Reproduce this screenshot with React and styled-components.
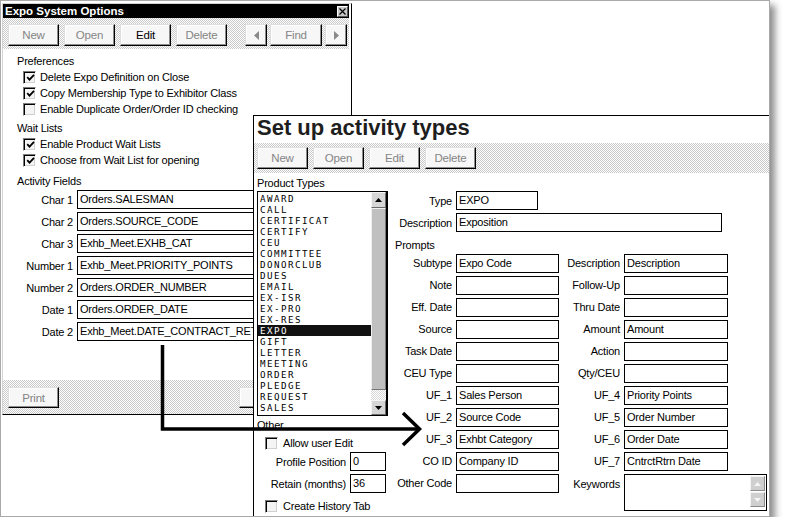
import React from 'react'
import styled, { createGlobalStyle } from 'styled-components'

const GlobalStyle = createGlobalStyle`
  html, body {
    margin: 0;
    padding: 0;
    background: #fff;
  }
  body {
    font-family: "Liberation Sans", Arial, sans-serif;
    font-size: 11px;
    letter-spacing: -0.2px;
    color: #000;
  }
`

const dither = (a, b) => `repeating-conic-gradient(${a} 0 25%, ${b} 0 50%) 0 0 / 2px 2px`

const PRODUCT_TYPES = [
  'AWARD', 'CALL', 'CERTIFICAT', 'CERTIFY', 'CEU', 'COMMITTEE', 'DONORCLUB',
  'DUES', 'EMAIL', 'EX-ISR', 'EX-PRO', 'EX-RES', 'EXPO', 'GIFT', 'LETTER',
  'MEETING', 'ORDER', 'PLEDGE', 'REQUEST', 'SALES',
]

const ACTIVITY_FIELDS = [
  ['Char 1', 'Orders.SALESMAN'],
  ['Char 2', 'Orders.SOURCE_CODE'],
  ['Char 3', 'Exhb_Meet.EXHB_CAT'],
  ['Number 1', 'Exhb_Meet.PRIORITY_POINTS'],
  ['Number 2', 'Orders.ORDER_NUMBER'],
  ['Date 1', 'Orders.ORDER_DATE'],
  ['Date 2', 'Exhb_Meet.DATE_CONTRACT_RET'],
]

const PROMPTS = [
  ['Subtype', 'Expo Code', 'Description', 'Description'],
  ['Note', '', 'Follow-Up', ''],
  ['Eff. Date', '', 'Thru Date', ''],
  ['Source', '', 'Amount', 'Amount'],
  ['Task Date', '', 'Action', ''],
  ['CEU Type', '', 'Qty/CEU', ''],
  ['UF_1', 'Sales Person', 'UF_4', 'Priority Points'],
  ['UF_2', 'Source Code', 'UF_5', 'Order Number'],
  ['UF_3', 'Exhbt Category', 'UF_6', 'Order Date'],
  ['CO ID', 'Company ID', 'UF_7', 'CntrctRtrn Date'],
]

function Check({ checked }) {
  return (
    <CheckBox>
      {checked && (
        <svg width="9" height="9" viewBox="0 0 9 9">
          <path d="M1.2 4.2 L3.5 6.6 L8 1.8" fill="none" stroke="#000" strokeWidth="1.8" />
        </svg>
      )}
    </CheckBox>
  )
}

function Arrow({ dir, color = '#000', w = 7, h = 4 }) {
  const pts = {
    up: `0,${h} ${w / 2},0 ${w},${h}`,
    down: `0,0 ${w / 2},${h} ${w},0`,
    left: `${w},0 0,${h / 2} ${w},${h}`,
    right: `0,0 ${w},${h / 2} 0,${h}`,
  }[dir]
  return (
    <svg width={w} height={h} viewBox={`0 0 ${w} ${h}`}>
      <polygon points={pts} fill={color} />
    </svg>
  )
}

export default function App() {
  return (
    <>
      <GlobalStyle />
      <Desktop>
        <OptionsWindow>
          <TitleBar>
            <span>Expo System Options</span>
            <CloseBox>
              <svg width="7" height="7" viewBox="0 0 7 7">
                <path d="M0.5 0.5 L6.5 6.5 M6.5 0.5 L0.5 6.5" stroke="#000" strokeWidth="1.2" />
              </svg>
            </CloseBox>
          </TitleBar>
          <ToolBar $top={6} $left={5}>
            <Btn $disabled>New</Btn>
            <Btn $disabled>Open</Btn>
            <Btn>Edit</Btn>
            <Btn $disabled>Delete</Btn>
            <NavGroup>
              <Btn $w={22}><Arrow dir="left" color="#8a8a8a" w={5} h={9} /></Btn>
              <Btn $w={52} $disabled>Find</Btn>
              <Btn $w={22}><Arrow dir="right" color="#8a8a8a" w={5} h={9} /></Btn>
            </NavGroup>
          </ToolBar>

          <OptionsBody>
            <SectionLabel>Preferences</SectionLabel>
            <CheckRow><Check checked />Delete Expo Definition on Close</CheckRow>
            <CheckRow><Check checked />Copy Membership Type to Exhibitor Class</CheckRow>
            <CheckRow><Check />Enable Duplicate Order/Order ID checking</CheckRow>

            <SectionLabel $gap={3}>Wait Lists</SectionLabel>
            <CheckRow><Check checked />Enable Product Wait Lists</CheckRow>
            <CheckRow><Check checked />Choose from Wait List for opening</CheckRow>

            <SectionLabel $gap={5}>Activity Fields</SectionLabel>
            <FieldList>
              {ACTIVITY_FIELDS.map(([label, value]) => (
                <FieldRow key={label}>
                  <FieldLabel $w={56}>{label}</FieldLabel>
                  <FieldBox $w={264}>{value}</FieldBox>
                </FieldRow>
              ))}
            </FieldList>
          </OptionsBody>

          <BottomBar>
            <Btn $h={21} $disabled>Print</Btn>
            {/* these two sit behind the activity window, only an edge shows */}
            <BottomRight>
              <Btn $h={21} />
              <Btn $h={21} />
            </BottomRight>
          </BottomBar>
        </OptionsWindow>

        <ActivityWindow>
          <BigTitle>Set up activity types</BigTitle>
          <ToolBar $top={4} $left={3}>
            <Btn $disabled>New</Btn>
            <Btn $disabled>Open</Btn>
            <Btn $disabled>Edit</Btn>
            <Btn $disabled>Delete</Btn>
          </ToolBar>

          <ActivityBody>
            <LeftColumn>
              <SmallLabel>Product Types</SmallLabel>
              <ListBox>
                <ListItems>
                  {PRODUCT_TYPES.map(t => (
                    <ListItem key={t} $selected={t === 'EXPO'}>{t}</ListItem>
                  ))}
                </ListItems>
                <ScrollBar>
                  <ScrollButton $h={16}><Arrow dir="up" /></ScrollButton>
                  <ScrollThumb />
                  <ScrollTrack />
                  <ScrollButton $h={15}><Arrow dir="down" /></ScrollButton>
                </ScrollBar>
              </ListBox>

              <SmallLabel $gap={2}>Other</SmallLabel>
              <OtherCheck><Check />Allow user Edit</OtherCheck>
              <OtherRow $gap={1}>
                <FieldLabel $w={89}>Profile Position</FieldLabel>
                <FieldBox $w={36}>0</FieldBox>
              </OtherRow>
              <OtherRow $gap={3}>
                <FieldLabel $w={89}>Retain (months)</FieldLabel>
                <FieldBox $w={36}>36</FieldBox>
              </OtherRow>
              <OtherCheck $gap={5}><Check />Create History Tab</OtherCheck>
            </LeftColumn>

            <RightColumn>
              <FieldRow>
                <FieldLabel $w={60}>Type</FieldLabel>
                <FieldBox $w={82}>EXPO</FieldBox>
              </FieldRow>
              <FieldRow>
                <FieldLabel $w={60}>Description</FieldLabel>
                <FieldBox $w={266}>Exposition</FieldBox>
              </FieldRow>
              <PromptsLabel>Prompts</PromptsLabel>
              <PromptGrid>
                {PROMPTS.map(([l1, v1, l2, v2]) => (
                  <React.Fragment key={l1}>
                    <GridLabel>{l1}</GridLabel>
                    <FieldBox>{v1}</FieldBox>
                    <GridLabel>{l2}</GridLabel>
                    <FieldBox $w={104}>{v2}</FieldBox>
                  </React.Fragment>
                ))}
                <GridLabel>Other Code</GridLabel>
                <FieldBox />
                <GridLabel $top>Keywords</GridLabel>
                <MemoBox>
                  <MemoText />
                  <MemoScroll>
                    <MemoButton><Arrow dir="up" color="#f4f4f4" /></MemoButton>
                    <MemoButton><Arrow dir="down" color="#f4f4f4" /></MemoButton>
                  </MemoScroll>
                </MemoBox>
              </PromptGrid>
            </RightColumn>
          </ActivityBody>
        </ActivityWindow>

        <Annotation width="770" height="517" viewBox="0 0 770 517">
          <polyline points="162.5,345 162.5,429 418,429" fill="none" stroke="#000" strokeWidth="3.5" />
          <polyline points="403,413 419.5,429 403,445" fill="none" stroke="#000" strokeWidth="3.5" />
        </Annotation>
      </Desktop>
    </>
  )
}

const Desktop = styled.div`
  position: relative;
  width: 770px;
  height: 517px;
  box-sizing: border-box;
  border: 1px solid #a9a9a9;
  background: #fff;
  box-shadow: 5px 5px 7px rgba(0, 0, 0, 0.45);
`

const OptionsWindow = styled.div`
  position: absolute;
  left: 1px;
  top: 2px;
  width: 350px;
  height: 412px;
  box-sizing: border-box;
  border-top: 1px solid #d4d4d4;
  border-left: 1px solid #d4d4d4;
  border-right: 1px solid #000;
  border-bottom: 1px solid #000;
  padding-right: 2px;
  background: #fff;
  display: flex;
  flex-direction: column;
`

const TitleBar = styled.div`
  height: 14px;
  background: #000;
  color: #fff;
  font-weight: bold;
  font-size: 11.5px;
  letter-spacing: 0;
  padding-left: 2px;
  display: flex;
  align-items: center;
  justify-content: space-between;
`

const CloseBox = styled.div`
  width: 11px;
  height: 11px;
  box-sizing: border-box;
  margin-right: 1px;
  background: #c8c8c8;
  border: 1px solid;
  border-color: #fff #555 #555 #fff;
  display: flex;
  align-items: center;
  justify-content: center;
`

const ToolBar = styled.div`
  height: ${p => (p.$top === 6 ? 31 : 30)}px;
  box-sizing: border-box;
  padding: ${p => p.$top}px 0 0 ${p => p.$left}px;
  background: ${dither('#c9c9c9', '#fff')};
  display: flex;
  gap: 5px;
`

const NavGroup = styled.div`
  display: flex;
  gap: 3px;
  margin-left: 13px;
`

const Btn = styled.div`
  width: ${p => p.$w || 51}px;
  height: ${p => p.$h || 22}px;
  box-sizing: border-box;
  display: flex;
  align-items: center;
  justify-content: center;
  background: #f7f7f7;
  border-top: 1px solid #dedede;
  border-left: 1px solid #dedede;
  border-right: 1px solid #000;
  border-bottom: 1px solid #000;
  box-shadow: inset -1px -1px 0 #8c8c8c, inset 1px 1px 0 #fff;
  color: ${p => (p.$disabled ? '#858585' : '#000')};
  font-size: 11.5px;
`

const OptionsBody = styled.div`
  flex: 1;
  padding: 4px 0 0 14px;
  display: flex;
  flex-direction: column;
`

const SectionLabel = styled.div`
  line-height: 16px;
  margin-top: ${p => p.$gap || 0}px;
`

const CheckRow = styled.div`
  display: flex;
  align-items: center;
  gap: 4px;
  height: 16px;
  padding-left: 6px;
`

const CheckBox = styled.div`
  width: 13px;
  height: 13px;
  box-sizing: border-box;
  flex: none;
  background: #f4f4f4;
  border: 1px solid;
  border-color: #7a7a7a #fff #fff #7a7a7a;
  box-shadow: inset 1px 1px 0 #000, inset -1px -1px 0 #d0d0d0;
  display: flex;
  align-items: center;
  justify-content: center;
  padding: 1px 0 0 1px;
`

const FieldList = styled.div`
  display: flex;
  flex-direction: column;
  gap: 3px;
  margin-top: 1px;
`

const FieldRow = styled.div`
  display: flex;
  align-items: center;
  gap: 4px;
  height: 19px;
`

const FieldLabel = styled.div`
  width: ${p => p.$w}px;
  text-align: right;
  white-space: nowrap;
  flex: none;
`

const FieldBox = styled.div`
  width: ${p => (p.$w ? `${p.$w}px` : 'auto')};
  height: 19px;
  box-sizing: border-box;
  border: 1px solid #000;
  background: #fff;
  padding-left: 2px;
  line-height: 17px;
  white-space: nowrap;
  overflow: hidden;
  flex: none;
`

const BottomBar = styled.div`
  height: 34px;
  box-sizing: border-box;
  padding: 7px 0 0 5px;
  background: ${dither('#c9c9c9', '#fff')};
  display: flex;
  justify-content: space-between;
`

const BottomRight = styled.div`
  display: flex;
  gap: 5px;
  padding-right: 3px;
`

const ActivityWindow = styled.div`
  position: absolute;
  left: 252px;
  top: 114px;
  right: 0;
  bottom: 0;
  border-top: 1px solid #000;
  border-left: 1px solid #000;
  background: #fff;
  display: flex;
  flex-direction: column;
`

const BigTitle = styled.div`
  height: 27px;
  padding-left: 3px;
  line-height: 24px;
  font-size: 22px;
  font-weight: bold;
  letter-spacing: 0;
  color: #1e1e1e;
`

const ActivityBody = styled.div`
  flex: 1;
  display: flex;
  padding: 3px 0 0 3px;
`

const LeftColumn = styled.div`
  width: 131px;
  display: flex;
  flex-direction: column;
`

const SmallLabel = styled.div`
  height: 15px;
  line-height: 15px;
  margin-top: ${p => p.$gap || 0}px;
`

const ListBox = styled.div`
  height: 225px;
  box-sizing: border-box;
  border: 1px solid #000;
  display: flex;
`

const ListItems = styled.div`
  flex: 1;
  padding-top: 1px;
  overflow: hidden;
`

const ListItem = styled.div`
  height: 11px;
  line-height: 11px;
  padding-left: 2px;
  font-family: "DejaVu Sans Mono", "Liberation Mono", monospace;
  font-size: 9.2px;
  letter-spacing: 1.45px;
  background: ${p => (p.$selected ? '#111' : 'transparent')};
  color: ${p => (p.$selected ? '#fff' : '#000')};
`

const ScrollBar = styled.div`
  width: 15px;
  display: flex;
  flex-direction: column;
  border-right: 1px solid #000;
`

const ScrollButton = styled.div`
  height: ${p => p.$h}px;
  box-sizing: border-box;
  background: #d6d6d6;
  border: 1px solid;
  border-color: #f4f4f4 #6a6a6a #6a6a6a #f4f4f4;
  display: flex;
  align-items: center;
  justify-content: center;
`

const ScrollThumb = styled.div`
  height: 182px;
  box-sizing: border-box;
  background: #c0c0c0;
  border: 1px solid;
  border-color: #f0f0f0 #777 #777 #f0f0f0;
`

const ScrollTrack = styled.div`
  flex: 1;
  background: ${dither('#d8d8d8', '#fff')};
`

const OtherCheck = styled.div`
  display: flex;
  align-items: center;
  gap: 5px;
  height: 16px;
  padding-left: 8px;
  margin-top: ${p => p.$gap || 2}px;
`

const OtherRow = styled(FieldRow)`
  margin-top: ${p => p.$gap}px;
`

const RightColumn = styled.div`
  margin-left: 4px;
  padding-top: 15px;
  display: flex;
  flex-direction: column;
  gap: 3px;
`

const PromptsLabel = styled.div`
  height: 16px;
  box-sizing: border-box;
  padding: 4px 0 0 3px;
  line-height: 12px;
`

const PromptGrid = styled.div`
  display: grid;
  grid-template-columns: 64px 103px 65px 143px;
  grid-template-rows: repeat(10, 19px) 37px;
  row-gap: 3px;
`

const GridLabel = styled.div`
  padding-right: 4px;
  text-align: right;
  line-height: ${p => (p.$top ? 21 : 19)}px;
  white-space: nowrap;
`

const MemoBox = styled.div`
  display: flex;
  box-sizing: border-box;
  border: 1px solid #000;
  background: #fff;
`

const MemoText = styled.div`
  flex: 1;
`

const MemoScroll = styled.div`
  width: 15px;
  display: flex;
  flex-direction: column;
  justify-content: space-between;
  padding: 1px 1px 3px 0;
`

const MemoButton = styled.div`
  height: 15px;
  box-sizing: border-box;
  background: #cfcfcf;
  border: 1px solid;
  border-color: #f2f2f2 #8a8a8a #8a8a8a #f2f2f2;
  display: flex;
  align-items: center;
  justify-content: center;
`

const Annotation = styled.svg`
  position: absolute;
  left: -1px;
  top: -1px;
  pointer-events: none;
`
